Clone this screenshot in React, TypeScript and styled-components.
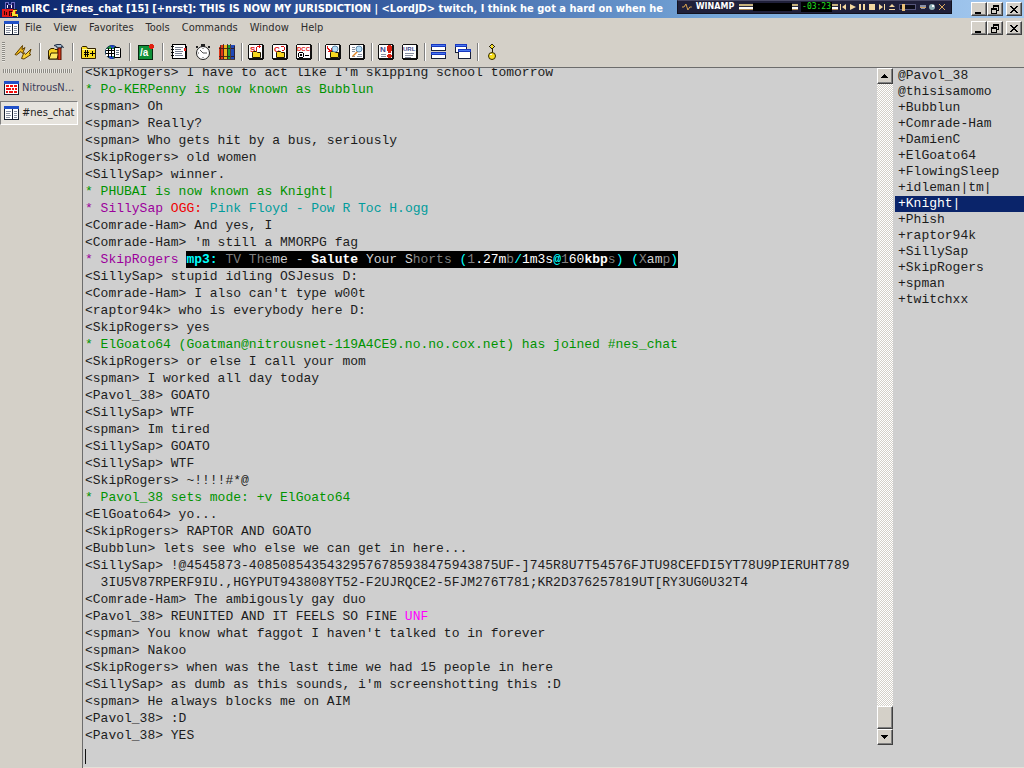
import React from "react";
import styled, { createGlobalStyle, css } from "styled-components";

const GlobalStyle = createGlobalStyle`
  * { box-sizing: border-box; }
  body { margin: 0; background: #d4d0c8; font-family: "DejaVu Sans Condensed", "Liberation Sans", sans-serif; }
  button { font: inherit; color: inherit; padding: 0; margin: 0; border: 0; background: none; }
  ul, ol { list-style: none; margin: 0; padding: 0; }
`;

const face = "#d4d0c8";

const raised = css`
  background: ${face};
  border: 1px solid;
  border-color: #ffffff #404040 #404040 #ffffff;
  box-shadow: inset -1px -1px 0 #808080;
`;

const Shell = styled.div`
  position: relative;
  display: flex;
  flex-direction: column;
  height: 100vh;
  overflow: hidden;
  background: ${face};
`;

const TitleBar = styled.header`
  display: flex;
  align-items: center;
  gap: 3px;
  height: 18px;
  flex: none;
  padding: 0 2px 0 2px;
  background: linear-gradient(90deg, #0a246a, #3a60a4 40%, #76a6d8 70%, #a6caf0);
`;

const Title = styled.h1`
  flex: 1;
  min-width: 0;
  margin: 0;
  overflow: hidden;
  white-space: nowrap;
  color: #ffffff;
  font: bold 11px/16px "DejaVu Sans Condensed", sans-serif;
`;

const WindowButtons = styled.div`
  display: flex;
  flex: none;
`;

const WindowButton = styled.button<{ $apart?: boolean }>`
  ${raised}
  display: flex;
  align-items: center;
  justify-content: center;
  width: 16px;
  height: 14px;
  margin-left: ${(p) => (p.$apart ? 3 : 0)}px;
`;

const MenuBar = styled.nav`
  display: flex;
  align-items: center;
  height: 20px;
  flex: none;
  padding: 0 2px 0 4px;
`;

const MenuItem = styled.button`
  padding: 0 6px;
  font-size: 11px;
  line-height: 16px;
  color: #2c2c2c;
`;

const Spacer = styled.div`
  flex: 1;
`;

const ToolBar = styled.div`
  display: flex;
  align-items: center;
  height: 29px;
  flex: none;
  padding: 0 0 2px 2px;
`;

const Grip = styled.div<{ $flat?: boolean }>`
  flex: none;
  ${(p) =>
    p.$flat
      ? css`
          height: 4px;
          margin: 0 5px 3px 3px;
          background: repeating-linear-gradient(90deg, #8c8a84 0 1px, #e8e6e0 1px 2px);
        `
      : css`
          width: 3px;
          height: 20px;
          margin-right: 6px;
          background: repeating-linear-gradient(#8c8a84 0 1px, #e8e6e0 1px 2px);
        `}
`;

const ToolButton = styled.button`
  display: flex;
  align-items: center;
  justify-content: center;
  width: 24px;
  height: 24px;
  flex: none;
`;

const Divider = styled.div<{ $wide?: boolean }>`
  width: 2px;
  height: 18px;
  margin: 0 ${(p) => (p.$wide ? 3 : 1)}px 0 ${(p) => (p.$wide ? 4 : 2)}px;
  border-left: 1px solid #808080;
  border-right: 1px solid #ffffff;
`;

const Body = styled.div`
  display: flex;
  flex: 1;
  min-height: 0;
`;

const SwitchBar = styled.aside`
  width: 82px;
  flex: none;
  padding: 2px 4px 0 0;
`;

const SwitchButton = styled.button<{ $active?: boolean }>`
  display: flex;
  align-items: center;
  gap: 3px;
  width: 100%;
  height: 24px;
  margin-bottom: 1px;
  padding-left: 3px;
  white-space: nowrap;
  border: 1px solid transparent;
  font: 11px/16px "DejaVu Sans Condensed", sans-serif;
  color: ${(p) => (p.$active ? "#202020" : "#3c3c58")};
  ${(p) =>
    p.$active &&
    css`
      background: #e6e3dd;
      border-color: #808080 #ffffff #ffffff #808080;
    `}
`;

const ChatWindow = styled.main`
  display: flex;
  flex-direction: column;
  flex: 1;
  min-width: 0;
  background: #cfcfcf;
  border-top: 1px solid #6c6c6c;
  border-left: 1px solid #6c6c6c;
  font: 13px/17px "Liberation Mono", "Courier New", monospace;
  color: #1c1c1c;
`;

const Panes = styled.div`
  display: flex;
  flex: 1;
  min-height: 0;
`;

const Log = styled.ol`
  display: flex;
  flex-direction: column;
  justify-content: flex-end;
  flex: 1;
  min-width: 0;
  overflow: hidden;
  padding: 0 0 1px 2px;
`;

type Tone = "said" | "event";

const Line = styled.li<{ $tone: Tone }>`
  flex: none;
  height: 17px;
  white-space: pre;
  color: ${(p) => (p.$tone === "event" ? "#009300" : "inherit")};
`;

const Ink = styled.span<{ $color: string; $bold?: boolean }>`
  color: ${(p) => p.$color};
  font-weight: ${(p) => (p.$bold ? "bold" : "normal")};
`;

const Banner = styled.span`
  display: inline-block;
  background: #000000;
`;

const ScrollBar = styled.div`
  display: flex;
  flex-direction: column;
  width: 16px;
  flex: none;
  background: repeating-conic-gradient(#ffffff 0 25%, #d4d0c8 0 50%) 0 0 / 2px 2px;
`;

const ScrollPart = styled.button<{ $thumb?: boolean }>`
  ${raised}
  display: flex;
  align-items: center;
  justify-content: center;
  flex: none;
  height: ${(p) => (p.$thumb ? 23 : 16)}px;
`;

const Members = styled.ul`
  width: 131px;
  flex: none;
  padding-left: 2px;
  line-height: 16px;
`;

const Member = styled.li<{ $selected?: boolean }>`
  height: 16px;
  padding-left: 3px;
  ${(p) =>
    p.$selected &&
    css`
      background: #0a246a;
      color: #ffffff;
    `}
`;

const EntryRow = styled.label`
  display: flex;
  flex: none;
  height: 23px;
  padding: 4px 2px 3px;
  border-bottom: 1px solid #e4e0d8;
`;

const Entry = styled.input`
  flex: 1;
  min-width: 0;
  padding: 0;
  border: 0;
  border-left: 1px solid #101010;
  outline: none;
  background: transparent;
  font: inherit;
  caret-color: transparent;
`;

const Player = styled.section`
  position: absolute;
  top: 0;
  right: 72px;
  display: flex;
  align-items: center;
  width: 275px;
  height: 14px;
  padding: 0 4px;
  background: #20203a;
  border: 1px solid #12121f;
  border-top-color: #4a4a66;
  color: #ffffff;
`;

const PlayerName = styled.span`
  margin: 0 5px 0 4px;
  font: bold 8px/12px "DejaVu Sans", sans-serif;
`;

const Stripes = styled.span<{ $short?: boolean }>`
  width: ${(p) => (p.$short ? 6 : 14)}px;
  height: 6px;
  background: linear-gradient(#c8b27c 0 2px, #2a2a40 2px 3px, #ffffff 3px 5px, #b08a50 5px);
`;

const Spectrum = styled.span`
  width: 40px;
  height: 8px;
  background: #000000;
`;

const Clock = styled.span`
  margin-left: 3px;
  padding: 0 1px;
  background: #000000;
  color: #20e020;
  font: 8px/10px "DejaVu Sans Mono", monospace;
`;

const PlayerButton = styled.button`
  display: flex;
  align-items: center;
  justify-content: center;
  width: 10px;
  height: 10px;
`;

const Volume = styled.input`
  appearance: none;
  width: 17px;
  height: 6px;
  margin: 0 2px;
  background: #0c0c18;
  border: 1px solid #55557a;
  &::-webkit-slider-thumb {
    appearance: none;
    width: 3px;
    height: 7px;
    background: #e8c078;
  }
`;

/* ---------- drawings ---------- */

const Svg = ({ w = 16, h = 16, smooth, children }: { w?: number; h?: number; smooth?: boolean; children: React.ReactNode }) => (
  <svg width={w} height={h} viewBox={`0 0 ${w} ${h}`} aria-hidden="true" shapeRendering={smooth ? "auto" : "crispEdges"}>
    {children}
  </svg>
);

const tiny = { fontFamily: "Liberation Sans, sans-serif", fontWeight: "bold" } as const;

const Logo = () => (
  <Svg w={16} h={17}>
    <path d="M3 1h3v2h3V1h3v10H3z" fill="#14145a" stroke="#6a6ac0" strokeWidth="1" />
    <path d="M5 4h1v3H5zM9 4h1v3H9z" fill="#fff" />
    <path d="M0 8h14v8H0z" fill="#e01818" />
    <path d="M2 10h1v4H2zM4 11h1v3H4zM7 10h1v5H7zM8 10h2v1H8zM9 12h1v3H9z" fill="#300" />
    <path d="M11 8h4v2h-2v3h3v3h-5l-1-2z" fill="#f8e030" />
    <path d="M11 8h4v1h-4zM14 11h1v1h-1zM11 15h4v1h-4z" fill="#3a2800" />
  </Svg>
);

const WindowIcon = ({ status }: { status?: boolean }) => (
  <Svg w={15} h={14}>
    <rect x="0" y="0" width="15" height="14" fill="#182030" />
    <rect x="1" y="3" width="13" height="10" fill="#fff" />
    <rect x="0" y="0" width="15" height="3" fill="#2050c8" />
    {status ? (
      <path
        d="M2 4h3v2H2zM6 4h3v2H6zM10 4h3v2h-3zM2 7h5v2H2zM8 7h2v2H8zM11 7h2v2h-2zM2 10h2v2H2zM5 10h4v2H5zM10 10h3v2h-3z"
        fill="#f01010"
      />
    ) : (
      <>
        <path d="M2 5h5v1H2zM2 7h4v1H2zM2 9h5v1H2zM2 11h4v1H2zM10 5h3v1h-3zM10 7h3v1h-3zM10 9h3v1h-3zM10 11h3v1h-3z" fill="#8890a0" />
        <path d="M8 3h1v10H8z" fill="#182030" />
      </>
    )}
  </Svg>
);

const Minimize = () => (
  <Svg w={10} h={9}>
    <path d="M1 7h6v2H1z" />
  </Svg>
);
const Restore = () => (
  <Svg w={10} h={9}>
    <path d="M3 0h6v6H7V5h1V2H4v1H3z" />
    <path d="M1 3h6v6H1zM2 5v3h4V5z" fillRule="evenodd" />
  </Svg>
);
const Close = () => (
  <Svg w={10} h={9}>
    <path d="M1 1h2v1h1v1h2V2h1V1h2v1H8v1H7v1H6v1h1v1h1v1h1v1H7V7H6V6H4v1H3v1H1V7h1V6h1V5h1V4H3V3H2V2H1z" />
  </Svg>
);

const Folder = ({ x = 0, y = 0 }: { x?: number; y?: number }) => (
  <path transform={`translate(${x} ${y})`} d="M.5 1.5l1-1h3l1 1h3v5h-8z" fill="#f8d820" stroke="#201800" shapeRendering="auto" />
);

const Sheet = ({ children }: { children: React.ReactNode }) => (
  <Svg>
    <path d="M1 0h14v1h1v14h-1v1H1v-1H0V1h1z" fill="#101010" />
    <path d="M1 1h13v13H1z" fill="#fff" />
    {children}
  </Svg>
);

const icons: Record<string, React.ReactNode> = {
  connect: (
    <Svg w={18} smooth>
      <path d="M1 10.500L8.500 1.500l-.5 4 3-2-2.500 6-1.500-2-4.500 3.500z" fill="#f0b818" stroke="#604000" />
      <path d="M7.500 14.500l2.500-6 1.500 2 5.500-5.500-1.500 5 1.500.5-7 4.500z" fill="#f8d030" stroke="#604000" />
    </Svg>
  ),
  options: (
    <Svg smooth>
      <path d="M.5 15V6.500L3 4.500h3l1 1h3v9.500z" fill="#f8d020" stroke="#302000" />
      <path d="M1 15l2-6h8l-2 6z" fill="#ffe860" stroke="#302000" />
      <path d="M6 1.500l3-1h4l2.500 3-2-1V4H9V2.500z" fill="#a8bcd0" stroke="#203048" />
      <path d="M10 4h3v12h-3z" fill="#d83818" stroke="#501000" />
    </Svg>
  ),
  channels: (
    <Svg smooth>
      <path d="M.5 14.500v-11l1-1h4l1 2h8v10z" fill="#f8dc20" stroke="#302000" />
      <path d="M1 5h13v1H1z" fill="#fff8a0" />
      <path d="M4 6h1v7H4zM6 6h1v7H6zM3 8h5v1H3zM3 10h5v1H3zM11 7h1v5h-1zM9 9h5v1H9z" />
    </Svg>
  ),
  list: (
    <Svg smooth>
      <circle cx="7" cy="8" r="6.500" fill="#1c9830" stroke="#082850" />
      <path d="M2 11l3-1 4 4-3 1zM5 1l5 1-3 3z" fill="#2040d0" />
      <path d="M1 5h8v7H1z" fill="#fff" />
      <path d="M3 4h1v9H3zM6 4h1v9H6zM1 6h8v1H1zM1 9h8v1H1z" />
      <path d="M9.500 3.500h5l1 1v9h-6z" fill="#fff" stroke="#000" />
      <path d="M11 6h3v1h-3zM11 8h3v1h-3zM11 10h3v1h-3z" fill="#607080" />
    </Svg>
  ),
  scripts: (
    <Svg>
      <rect x=".5" y="1.500" width="14" height="14" fill="#109038" stroke="#082810" />
      <text x="2" y="12" fontSize="10" fill="#fff" {...tiny}>/a</text>
      <path d="M12 0h3v1h1v3h-1v1h-3V4h-1V1h1z" fill="#e02010" />
    </Svg>
  ),
  address: (
    <Svg smooth>
      <rect x="1.500" y=".5" width="13" height="14" fill="#fff" stroke="#000" />
      <path d="M4 3h8v1H4zM4 5h6v1H4zM4 7h8v1H4zM4 9h7v1H4zM4 11h8v1H4z" fill="#788090" />
      <path d="M0 2h3v1H0zM0 5h3v1H0zM0 8h3v1H0zM0 11h3v1H0zM14 2h2v13h-2z" />
      <path d="M13 4h2v3h-2z" fill="#e02020" />
    </Svg>
  ),
  timer: (
    <Svg smooth>
      <path d="M6 0h4v3H6zM1 2h2v2H1zM13 2h2v2h-2z" fill="#202020" />
      <circle cx="8" cy="9" r="6.500" fill="#fff" stroke="#202020" />
      <path d="M5 6l3 3h4M8 4v1M8 13v1M3 9h1" fill="none" stroke="#505050" />
    </Svg>
  ),
  books: (
    <Svg>
      <path d="M0 3h2V1h4v14H0z" fill="#e03818" />
      <path d="M5 1h3v14H5z" fill="#f0b820" />
      <path d="M8 1h3v14H8z" fill="#18a038" />
      <path d="M12 1h4v14h-4z" fill="#2048b8" />
      <path d="M1 1h1v14H1zM4 0h1v15H4zM8 0h1v15H8zM11 0h1v15h-1zM15 2h1v13h-1zM0 4h16v1H0zM0 12h16v1H0zM0 15h16v1H0z" fill="#301818" fillOpacity=".8" />
    </Svg>
  ),
  send: (
    <Sheet>
      <text x="2" y="8" fontSize="8" fill="#e01010" {...tiny}>S</text>
      <path d="M8 3h1v4H8zM9 2h4v1H9zM11 1h1v3h-1z" fill="#e01010" />
      <Folder x={4} y={7} />
    </Sheet>
  ),
  chat: (
    <Sheet>
      <text x="2" y="8" fontSize="8" fill="#e01010" {...tiny}>C</text>
      <path d="M9 2h3v1H9zM12 3h1v3h-1zM10 6h2v1h-2z" fill="#e01010" />
      <Folder x={4} y={7} />
    </Sheet>
  ),
  dcc: (
    <Sheet>
      <text x="1" y="7" fontSize="6" fill="#e01010" {...tiny}>DCC</text>
      <path d="M3 8h4v1h1v4H7v1H3v-1H2V9h1zM3 9v4h4V9zM4 10h2v2H4zM9 11h4v1H9z" fillRule="evenodd" />
    </Sheet>
  ),
  received: (
    <Sheet>
      <path d="M2 2h1v2h1v1h1v1h1V4h1v4H3V7h1V6H3V5H2z" fill="#e01010" />
      <Folder x={5} y={7} />
      <circle cx="10" cy="5" r="3" fill="#b8e0f8" stroke="#6088a8" shapeRendering="auto" />
    </Sheet>
  ),
  logs: (
    <Sheet>
      <path d="M3 3h3v1H3zM3 5h3v1H3zM3 7h3v1H3zM9 10h4v1H9zM8 12h5v1H8zM3 12h3v1H3z" fill="#8890a0" />
      <path d="M3 12l5-5 1 1-5 5z" fill="#e08828" shapeRendering="auto" />
      <circle cx="10" cy="5" r="3" fill="#b8e0f8" stroke="#6088a8" shapeRendering="auto" />
    </Sheet>
  ),
  notify: (
    <Sheet>
      <text x="2" y="8" fontSize="8" fill="#404888" {...tiny}>N</text>
      <path d="M3 10h5v1H3zM3 12h5v1H3z" fill="#8890a0" />
      <path d="M10 1h3v1h1v5h-1v2h-3V7H9V2h1zM10 10h3v1h1v2h-1v1h-3v-1H9v-2h1z" fill="#d82010" />
    </Sheet>
  ),
  urls: (
    <Sheet>
      <text x="1" y="7" fontSize="6" fill="#404888" {...tiny}>URL</text>
      <path d="M3 9h9v1H3zM3 11h8v1H3zM3 13h6v1H3z" fill="#8890a0" />
    </Sheet>
  ),
  tile: (
    <Svg>
      <path d="M0 0h15v7H0zM0 8h15v7H0z" fill="#182038" />
      <path d="M1 3h13v3H1zM1 11h13v3H1z" fill="#fff" />
      <path d="M0 0h15v3H0zM0 8h15v3H0z" fill="#1838c0" />
      <path d="M1 1h13v1H1zM1 9h13v1H1z" fill="#4878f0" />
    </Svg>
  ),
  cascade: (
    <Svg>
      <path d="M0 0h12v9H0z" fill="#182038" />
      <path d="M1 3h10v5H1z" fill="#fff" />
      <path d="M3 5h13v10H3z" fill="#182038" />
      <path d="M4 8h11v6H4z" fill="#fff" />
      <path d="M0 0h12v3H0zM3 5h13v3H3z" fill="#1838c0" />
      <path d="M1 1h10v1H1zM4 6h11v1H4z" fill="#4878f0" />
    </Svg>
  ),
  about: (
    <Svg smooth>
      <circle cx="8" cy="12" r="3.500" fill="#f8e020" stroke="#302800" />
      <path d="M6 10h2v1H6z" fill="#fff" />
      <path d="M8 5h1v3H8zM7 0h2v1H7zM6 1h1v1H6zM9 1h1v1H9zM6 3h1v1H6zM9 3h1v1H9zM5 2h1v1H5zM10 2h1v1h-1zM7 4h2v1H7z" fill="#282000" />
      <path d="M7 1h2v3H7z" fill="#f8e020" />
    </Svg>
  ),
};

const toolGroups: { wide?: boolean; tools: [string, string][] }[] = [
  { wide: true, tools: [["connect", "Connect"]] },
  { wide: true, tools: [["options", "Options"]] },
  { wide: true, tools: [["channels", "Channels folder"], ["list", "List channels"]] },
  { wide: true, tools: [["scripts", "Scripts editor"]] },
  { tools: [["address", "Address book"], ["timer", "Timer"], ["books", "Colours"]] },
  { tools: [["send", "Send file"], ["chat", "Chat"], ["dcc", "DCC options"]] },
  { tools: [["received", "Received files"], ["logs", "Log files"]] },
  { tools: [["notify", "Notify list"], ["urls", "URL list"]] },
  { tools: [["tile", "Tile windows"], ["cascade", "Cascade windows"]] },
  { tools: [["about", "About"]] },
];

/* ---------- data ---------- */

const PURPLE = "#9c009c";
const TEAL = "#009c9c";
const CYAN = "#00ffff";
const GREY = "#7f7f7f";
const PALE = "#d2d2d2";
const WHITE = "#ffffff";

const bannerRuns: [string, string, boolean?][] = [
  ["mp3:", CYAN, true],
  [" TV The", GREY],
  ["me - ", PALE],
  ["Salute", WHITE, true],
  [" Your S", PALE],
  ["horts ", GREY],
  ["(", CYAN],
  ["1", GREY],
  [".27m", WHITE],
  ["b", GREY],
  ["/", CYAN],
  ["1m3s", WHITE],
  ["@", CYAN, true],
  ["1", GREY],
  ["60", WHITE],
  ["kbp", WHITE, true],
  ["s", GREY],
  [") (", CYAN],
  ["X", GREY],
  ["am", PALE],
  ["p", GREY],
  [")", CYAN],
];

const messages: [Tone, React.ReactNode][] = [
  ["said", "<SkipRogers> I have to act like I'm skipping school tomorrow"],
  ["event", "* Po-KERPenny is now known as Bubblun"],
  ["said", "<spman> Oh"],
  ["said", "<spman> Really?"],
  ["said", "<spman> Who gets hit by a bus, seriously"],
  ["said", "<SkipRogers> old women"],
  ["said", "<SillySap> winner."],
  ["event", "* PHUBAI is now known as Knight|"],
  [
    "said",
    <>
      <Ink $color={PURPLE}>* SillySap </Ink>
      <Ink $color="#f00000">OGG: </Ink>
      <Ink $color={TEAL}>Pink Floyd - Pow R Toc H.ogg</Ink>
    </>,
  ],
  ["said", "<Comrade-Ham> And yes, I"],
  ["said", "<Comrade-Ham> 'm still a MMORPG fag"],
  [
    "said",
    <>
      <Ink $color={PURPLE}>* SkipRogers </Ink>
      <Banner>
        {bannerRuns.map(([text, color, bold], i) => (
          <Ink key={i} $color={color} $bold={bold}>{text}</Ink>
        ))}
      </Banner>
    </>,
  ],
  ["said", "<SillySap> stupid idling OSJesus D:"],
  ["said", "<Comrade-Ham> I also can't type w00t"],
  ["said", "<raptor94k> who is everybody here D:"],
  ["said", "<SkipRogers> yes"],
  ["event", "* ElGoato64 (Goatman@nitrousnet-119A4CE9.no.no.cox.net) has joined #nes_chat"],
  ["said", "<SkipRogers> or else I call your mom"],
  ["said", "<spman> I worked all day today"],
  ["said", "<Pavol_38> GOATO"],
  ["said", "<SillySap> WTF"],
  ["said", "<spman> Im tired"],
  ["said", "<SillySap> GOATO"],
  ["said", "<SillySap> WTF"],
  ["said", "<SkipRogers> ~!!!!#*@"],
  ["event", "* Pavol_38 sets mode: +v ElGoato64"],
  ["said", "<ElGoato64> yo..."],
  ["said", "<SkipRogers> RAPTOR AND GOATO"],
  ["said", "<Bubblun> lets see who else we can get in here..."],
  ["said", "<SillySap> !@4545873-40850854354329576785938475943875UF-]745R8U7T54576FJTU98CEFDI5YT78U9PIERUHT789"],
  ["said", "  3IU5V87RPERF9IU.,HGYPUT943808YT52-F2UJRQCE2-5FJM276T781;KR2D376257819UT[RY3UG0U32T4"],
  ["said", "<Comrade-Ham> The ambigously gay duo"],
  [
    "said",
    <>
      {"<Pavol_38> REUNITED AND IT FEELS SO FINE "}
      <Ink $color="#ff00ff">UNF</Ink>
    </>,
  ],
  ["said", "<spman> You know what faggot I haven't talked to in forever"],
  ["said", "<spman> Nakoo"],
  ["said", "<SkipRogers> when was the last time we had 15 people in here"],
  ["said", "<SillySap> as dumb as this sounds, i'm screenshotting this :D"],
  ["said", "<spman> He always blocks me on AIM"],
  ["said", "<Pavol_38> :D"],
  ["said", "<Pavol_38> YES"],
];

const members = [
  "@Pavol_38", "@thisisamomo", "+Bubblun", "+Comrade-Ham", "+DamienC", "+ElGoato64", "+FlowingSleep", "+idleman|tm|",
  "+Knight|", "+Phish", "+raptor94k", "+SillySap", "+SkipRogers", "+spman", "+twitchxx",
];

const playerControls: [string, string][] = [
  ["Previous", "M1 1h1v6H1zM7 1v6L3 4z"],
  ["Play", "M1 1l6 3-6 3z"],
  ["Pause", "M1 1h2v6H1zM5 1h2v6H5z"],
  ["Stop", "M1 1h6v6H1z"],
  ["Next", "M1 1l4 3-4 3zM6 1h1v6H6z"],
  ["Eject", "M4 1l3 3H1zM1 6h6v1H1z"],
];

const Controls = () => (
  <WindowButtons>
    <WindowButton aria-label="Minimize"><Minimize /></WindowButton>
    <WindowButton aria-label="Restore"><Restore /></WindowButton>
    <WindowButton aria-label="Close" $apart><Close /></WindowButton>
  </WindowButtons>
);

const Winamp = () => (
  <Player aria-label="Winamp">
    <Svg w={10} h={8}>
      <path d="M0 4h2l2-3 2 6 2-3h2" fill="none" stroke="#e0a850" shapeRendering="auto" />
    </Svg>
    <PlayerName>WINAMP</PlayerName>
    <Stripes />
    <Spectrum />
    <Stripes $short />
    <Clock>-03:23</Clock>
    <Stripes $short />
    <Spacer />
    {playerControls.map(([label, d]) => (
      <PlayerButton key={label} aria-label={label}>
        <Svg w={8} h={8} smooth><path d={d} fill="#f4d8a0" /></Svg>
      </PlayerButton>
    ))}
    <Volume type="range" aria-label="Volume" defaultValue={20} />
    <PlayerButton aria-label="Minimize player">
      <Svg w={8} h={8}><path d="M1 2h6v3H6v1H2V5H1z" fill="#8890a8" /><path d="M1 4h6v1H1z" fill="#d0a060" /></Svg>
    </PlayerButton>
    <PlayerButton aria-label="Player mode">
      <Svg w={8} h={8} smooth><circle cx="4" cy="4" r="3" fill="#90b0b8" /><path d="M4 2h2v2H4z" fill="#fff" /></Svg>
    </PlayerButton>
    <PlayerButton aria-label="Close player">
      <Svg w={8} h={8} smooth><path d="M1 1l6 6M7 1L1 7" stroke="#d8a860" /></Svg>
    </PlayerButton>
  </Player>
);

export default function App() {
  return (
    <>
      <GlobalStyle />
      <Shell>
        <TitleBar>
          <Logo />
          <Title>
            {"mIRC - [#nes_chat [15] [+nrst]: THIS IS NOW MY JURISDICTION | <LordJD> twitch, I think he got a hard on when he"}
          </Title>
          <Controls />
        </TitleBar>
        <Winamp />
        <MenuBar>
          <WindowIcon />
          {["File", "View", "Favorites", "Tools", "Commands", "Window", "Help"].map((name) => (
            <MenuItem key={name}>{name}</MenuItem>
          ))}
          <Spacer />
          <Controls />
        </MenuBar>
        <ToolBar>
          <Grip />
          {toolGroups.map((group, i) => (
            <React.Fragment key={i}>
              {group.tools.map(([key, label]) => (
                <ToolButton key={key} aria-label={label}>{icons[key]}</ToolButton>
              ))}
              {i < toolGroups.length - 1 && <Divider $wide={group.wide} />}
            </React.Fragment>
          ))}
        </ToolBar>
        <Body>
          <SwitchBar>
            <Grip $flat />
            <SwitchButton><WindowIcon status />NitrousN...</SwitchButton>
            <SwitchButton $active><WindowIcon />#nes_chat</SwitchButton>
          </SwitchBar>
          <ChatWindow>
            <Panes>
              <Log>
                {messages.map(([tone, content], i) => (
                  <Line key={i} $tone={tone}>{content}</Line>
                ))}
              </Log>
              <ScrollBar>
                <ScrollPart aria-label="Scroll up"><Svg w={8} h={4}><path d="M3 0h1v1h1v1h1v1h1v1H0V3h1V2h1V1h1z" /></Svg></ScrollPart>
                <Spacer />
                <ScrollPart $thumb aria-label="Scroll position" />
                <ScrollPart aria-label="Scroll down"><Svg w={8} h={4}><path d="M0 0h7v1H6v1H5v1H4v1H3V3H2V2H1V1H0z" /></Svg></ScrollPart>
              </ScrollBar>
              <Members>
                {members.map((name) => (
                  <Member key={name} $selected={name === "+Knight|"}>{name}</Member>
                ))}
              </Members>
            </Panes>
            <EntryRow>
              <Entry type="text" aria-label="Message" />
            </EntryRow>
          </ChatWindow>
        </Body>
      </Shell>
    </>
  );
}
